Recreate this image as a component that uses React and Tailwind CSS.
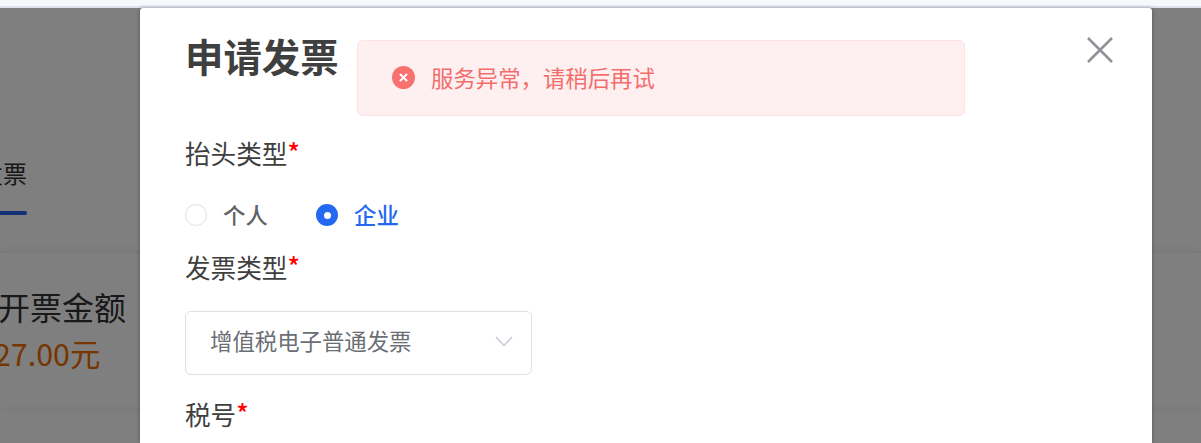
const FONT = "font-['Noto_Sans_CJK_SC','Noto_Sans',sans-serif]"

function Label({ children, className = '' }) {
  return (
    <div className={`flex text-[25.6px] leading-[36px] text-[#3f3f3f] ${className}`}>
      {children}
      <span className="text-[25.6px] font-medium leading-[32px] text-[#ff0000]">*</span>
    </div>
  )
}

function Backdrop() {
  return (
    <div className="h-full overflow-hidden bg-white">
      <div className="relative h-[203px] w-[27px] overflow-hidden">
        <div className="absolute right-0 top-[149px] whitespace-nowrap text-[24px] leading-[32px] text-[#333333]">发票</div>
      </div>
      <div className="h-[4px] w-[27px] rounded-r-full bg-[#2563eb]" />
      <div className="mt-[37px] h-[155px] border-t border-[#f0f0f0] bg-white pt-[32px] shadow-[0_0_12px_rgba(0,0,0,0.08)]">
        <div className="ml-[-34px] whitespace-nowrap text-[32px] leading-[42px] text-[#333333]">发开票金额</div>
        <div className="ml-[-6px] mt-[7px] whitespace-nowrap text-[30.4px] leading-[38px] text-[#ea6c00]">27.00元</div>
      </div>
    </div>
  )
}

export default function App() {
  return (
    <div className={`relative h-[443px] w-[1201px] overflow-hidden ${FONT}`}>
      <div className="h-[8px] border-b-2 border-[#e0e3ef] bg-[#f7f8fd]" />
      <div className="h-[435px]">
        <Backdrop />
      </div>

      {/* mask and dialog */}
      <div className="absolute inset-x-0 bottom-0 top-[8px] bg-black/50">
        <div className="ml-[140px] h-full w-[1012px] rounded-t-[3px] bg-white pl-[45px] shadow-[0_0_4px_rgba(0,0,0,0.35)]">
          <div className="flex items-start">
            <h2 className="mt-[20px] w-[154px] shrink-0 text-[38.4px] font-bold leading-[54px] text-[#3f3f3f]">申请发票</h2>
            <div className="ml-[18px] mt-[32px] flex h-[76px] w-[608px] shrink-0 items-center rounded-[6px] border border-[#fde2e2] bg-[#fef0f0] pl-[34px] text-[#f56c6c]">
              <svg width="23" height="23" viewBox="0 0 23 23" className="mt-[-2px]">
                <circle cx="11.5" cy="11.5" r="11.5" fill="#f87171" />
                <path d="M8.5 8.5l6 6M14.5 8.5l-6 6" stroke="#fff" strokeWidth="2" strokeLinecap="round" />
              </svg>
              <span className="ml-[16px] mt-[-2px] text-[22.4px] leading-[32px]">服务异常，请稍后再试</span>
            </div>
            <svg width="26" height="26" viewBox="0 0 26 26" className="ml-[122px] mt-[29px] shrink-0 text-[#8f9298]">
              <path d="M1 1l24 24M25 1L1 25" fill="none" stroke="currentColor" strokeWidth="2.6" />
            </svg>
          </div>

          <Label className="mt-[19px]">抬头类型</Label>

          <div className="mt-[27px] flex h-[34px] items-center text-[22.4px] font-medium">
            <span className="h-[22px] w-[22px] rounded-full border border-[#dfe1ea] bg-white" />
            <span className="ml-[16px] w-[48px] text-[#606266]">个人</span>
            <span className="ml-[45px] flex h-[22px] w-[22px] items-center justify-center rounded-full bg-[#2468f2]">
              <span className="h-[7px] w-[7px] rounded-full bg-white" />
            </span>
            <span className="ml-[16px] text-[#2468f2]">企业</span>
          </div>

          <Label className="mt-[17px]">发票类型</Label>

          <div className="mt-[26px] flex h-[64px] w-[347px] items-center justify-between rounded-[6px] border border-[#dcdfe6] pb-[4px] pl-[24px] pr-[18px]">
            <span className="text-[22.4px] text-[#6b6e74]">增值税电子普通发票</span>
            <svg width="18" height="11" viewBox="0 0 18 11" className="text-[#c8cad2]">
              <path d="M1 1l8 8.5L17 1" fill="none" stroke="currentColor" strokeWidth="1.4" />
            </svg>
          </div>

          <Label className="mt-[21px]">税号</Label>
        </div>
      </div>
    </div>
  )
}
